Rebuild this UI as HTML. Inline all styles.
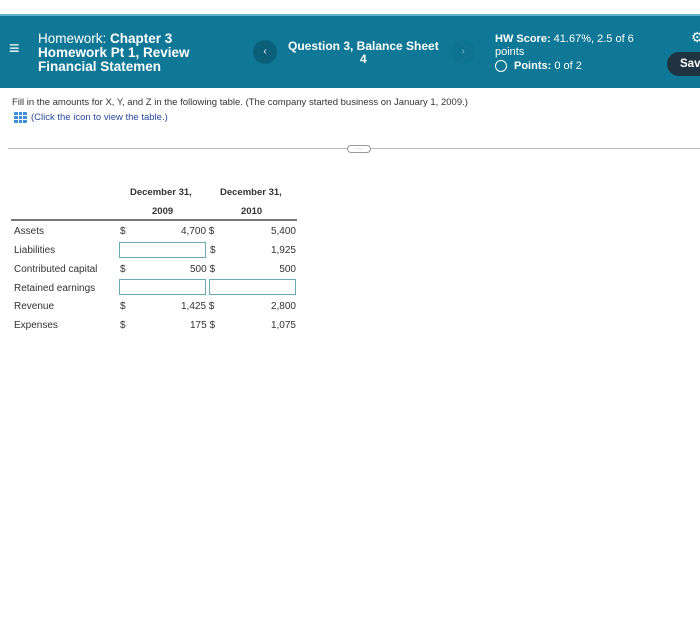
<!DOCTYPE html>
<html><head><style>
*{margin:0;padding:0;box-sizing:border-box}
body{width:700px;height:620px;background:#fff;font-family:"Liberation Sans",sans-serif;position:relative;overflow:hidden;color:#222}
.abs{position:absolute;white-space:nowrap}
#bar{position:absolute;left:0;top:14px;width:700px;height:74px;background:#0f7896;border-top:2px solid #5fb2c9}
.w{color:#fff}
.t{font-size:10px;color:#333}
.box{position:absolute;border:1px solid #6aa9b7;height:16px;background:#fff}
</style></head><body>
<div id="bar"></div>
<div class="abs w" style="left:9px;top:38px;font-size:18px;font-weight:bold">≡</div>
<div class="abs w" style="left:38px;top:32px;font-size:13.5px;line-height:14px">Homework: <b>Chapter 3</b><br><b>Homework Pt 1, Review</b><br><b>Financial Statemen</b></div>
<div class="abs" style="left:253px;top:40px;width:24px;height:24px;border-radius:12px;background:#0b5f79;color:#fff;font-size:10px;text-align:center;line-height:24px">‹</div>
<div class="abs w" style="left:288px;top:40px;font-size:12px;font-weight:bold;text-align:center;line-height:13px">Question 3, Balance Sheet<br>4</div>
<div class="abs" style="left:451px;top:40px;width:24px;height:24px;border-radius:12px;background:#0d7390;color:#7fbdd0;font-size:10px;text-align:center;line-height:24px">›</div>
<div class="abs w" style="left:495px;top:33px;font-size:11px;line-height:13px"><b>HW Score:</b> 41.67%, 2.5 of 6<br>points</div>
<div class="abs" style="left:495px;top:60px;width:12px;height:12px;border:1.5px solid #fff;border-radius:50%"></div>
<div class="abs w" style="left:514px;top:60px;font-size:11px"><b>Points:</b> 0 of 2</div>
<div class="abs w" style="left:691px;top:29px;font-size:14px">⚙</div>
<div class="abs" style="left:667px;top:52px;width:50px;height:24px;border-radius:12px;background:#1f3342;color:#fff;font-size:11.5px;font-weight:bold;line-height:24px;padding-left:13px">Save</div>
<div class="abs t" style="left:12px;top:97px;font-size:9.5px">Fill in the amounts for X, Y, and Z in the following table. (The company started business on January 1, 2009.)</div>
<div class="abs" style="left:14px;top:112px;width:13px;height:11px;background:#3d8fd6;border-radius:1px;background-image:linear-gradient(90deg,transparent 4px,#fff 4px,#fff 5px,transparent 5px,transparent 8px,#fff 8px,#fff 9px,transparent 9px),linear-gradient(transparent 3px,#fff 3px,#fff 4px,transparent 4px,transparent 7px,#fff 7px,#fff 8px,transparent 8px)"></div>
<div class="abs" style="left:31px;top:112px;font-size:9.5px;color:#2a4aa0">(Click the icon to view the table.)</div>
<div class="abs" style="left:8px;top:148px;width:692px;height:1px;background:#bbb"></div>
<div class="abs" style="left:347px;top:145px;width:24px;height:8px;border:1px solid #999;border-radius:4px;background:#fff;font-size:6px;line-height:6px;text-align:center;color:#666">···</div>
<div class="abs" style="left:130px;top:187px;font-size:9.5px;font-weight:bold;color:#333">December 31,</div>
<div class="abs" style="left:220px;top:187px;font-size:9.5px;font-weight:bold;color:#333">December 31,</div>
<div class="abs" style="left:152px;top:206px;font-size:9.5px;font-weight:bold;color:#333">2009</div>
<div class="abs" style="left:241px;top:206px;font-size:9.5px;font-weight:bold;color:#333">2010</div>
<div class="abs" style="left:11px;top:219px;width:286px;height:2px;background:#777"></div>
<div class="abs t" style="left:14px;top:226px">Assets</div>
<div class="abs t" style="left:14px;top:245px">Liabilities</div>
<div class="abs t" style="left:14px;top:264px">Contributed capital</div>
<div class="abs t" style="left:14px;top:283px">Retained earnings</div>
<div class="abs t" style="left:14px;top:301px">Revenue</div>
<div class="abs t" style="left:14px;top:320px">Expenses</div>
<div class="abs t" style="left:120px;top:226px">$</div>
<div class="abs t" style="left:120px;top:264px">$</div>
<div class="abs t" style="left:120px;top:301px">$</div>
<div class="abs t" style="left:120px;top:320px">$</div>
<div class="abs t" style="left:181px;top:226px">4,700 $</div>
<div class="abs t" style="left:190px;top:264px">500 $</div>
<div class="abs t" style="left:181px;top:301px">1,425 $</div>
<div class="abs t" style="left:190px;top:320px">175 $</div>
<div class="abs t" style="left:210px;top:245px">$</div>
<div class="abs t" style="right:404px;top:226px">5,400</div>
<div class="abs t" style="right:404px;top:245px">1,925</div>
<div class="abs t" style="right:404px;top:264px">500</div>
<div class="abs t" style="right:404px;top:301px">2,800</div>
<div class="abs t" style="right:404px;top:320px">1,075</div>
<div class="box" style="left:119px;top:242px;width:87px"></div>
<div class="box" style="left:119px;top:279px;width:87px"></div>
<div class="box" style="left:209px;top:279px;width:87px"></div>
</body></html>
